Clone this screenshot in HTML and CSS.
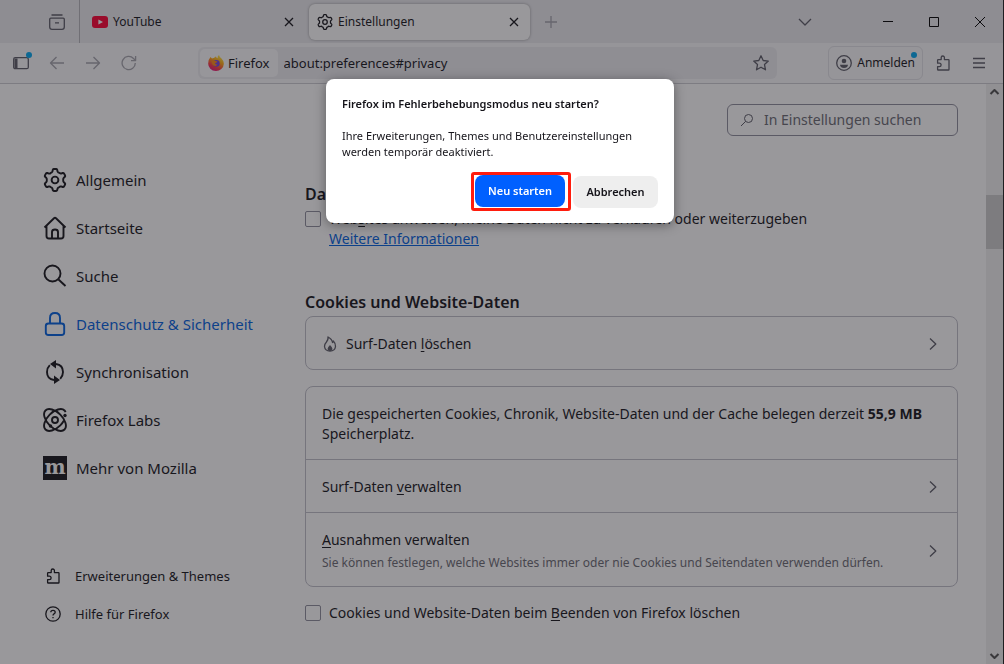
FILE: index.html
```
<!DOCTYPE html>
<html lang="de">
  <head>
    <meta charset="UTF-8" />
    <meta name="viewport" content="width=device-width, initial-scale=1.0" />
    <title>Einstellungen</title>
    <link rel="stylesheet" href="styles.css">
  </head>
  <body>
    <svg class="sprite" aria-hidden="true">
      <symbol id="gear" viewBox="-12 -12 24 24">
        <path d="M-2.6-8.4L-2.2-10.2Q-1.9-11 -1.1-11H1.1Q1.9-11 2.2-10.2L2.6-8.4Q3.2-7.2 4.2-7.2L6-6.4L7.7-7Q8.6-7.2 9-6.5L10.1-4.6Q10.5-3.8 9.9-3.2L8.6-2Q7.8-1 8.3 0Q7.8 1 8.6 2L9.9 3.2Q10.5 3.8 10.1 4.6L9 6.5Q8.6 7.2 7.7 7L6 6.4Q5 6.2 4.2 7.2Q3.2 7.2 2.6 8.4L2.2 10.2Q1.9 11 1.1 11H-1.1Q-1.9 11-2.2 10.2L-2.6 8.4Q-3.2 7.2-4.2 7.2Q-5 6.2-6 6.4L-7.7 7Q-8.6 7.2-9 6.5L-10.1 4.6Q-10.5 3.8-9.9 3.2L-8.6 2Q-7.8 1-8.3 0Q-7.8-1-8.6-2L-9.9-3.2Q-10.5-3.8-10.1-4.6L-9-6.5Q-8.6-7.2-7.7-7L-6-6.4Q-5-6.2-4.2-7.2Q-3.2-7.2-2.6-8.4Z" />
        <circle r="3.4" />
      </symbol>
      <symbol id="puzzle" viewBox="0 0 16 16">
        <path d="M2.6 5.2Q2.6 4.6 3.2 4.6H6.2V2.6a1.6 1.6 0 0 1 3.2 0V4.6H13.4Q14 4.6 14 5.2V14.4Q14 15 13.4 15H3.2Q2.6 15 2.6 14.4V11.6H4.4a1.6 1.6 0 0 0 0-3.4H2.6Z" />
      </symbol>
      <symbol id="close" viewBox="0 0 16 16">
        <path d="M4 4L12 12M12 4L4 12" />
      </symbol>
      <symbol id="chevron" viewBox="0 0 16 16">
        <path d="M5 2.5L10.8 8L5 13.5" />
      </symbol>
    </svg>

    <div class="window">
      <header class="tab-strip">
        <button class="archive" aria-label="Ansicht">
          <svg class="icon" viewBox="0 0 16 16"><path d="M2.5 1H13.5M1.8 4.2H14.2Q15.3 4.2 15.3 5.3V13Q15.3 15.3 13 15.3H3Q.7 15.3 .7 13V5.3Q.7 4.2 1.8 4.2ZM6 8.8H10" /></svg>
        </button>
        <div class="tab">
          <svg class="icon youtube" viewBox="0 0 16 16"><rect y="2" width="16" height="12" rx="3" /><path d="M6.4 5.4L11 8L6.4 10.6Z" /></svg>
          <span>YouTube</span>
          <button aria-label="Tab schließen"><svg class="icon dark"><use href="#close" /></svg></button>
        </div>
        <div class="tab active">
          <svg class="icon dark gear"><use href="#gear" /></svg>
          <span>Einstellungen</span>
          <button aria-label="Tab schließen"><svg class="icon dark"><use href="#close" /></svg></button>
        </div>
        <button class="new-tab" aria-label="Neuer Tab"><svg class="icon faint" viewBox="0 0 16 16"><path d="M8 2V14M2 8H14" /></svg></button>
        <div class="window-buttons">
          <button class="all-tabs" aria-label="Alle Tabs"><svg class="icon" viewBox="0 0 16 16"><path d="M2 5L8 11L14 5" /></svg></button>
          <button aria-label="Minimieren"><svg class="icon caption" viewBox="0 0 16 16"><path d="M3 7.5H13" /></svg></button>
          <button aria-label="Maximieren"><svg class="icon caption" viewBox="0 0 16 16"><path d="M3.5 3.5H12.5V12.5H3.5Z" /></svg></button>
          <button aria-label="Schließen"><svg class="icon caption" viewBox="0 0 16 16"><path d="M3 3L13 13M13 3L3 13" /></svg></button>
        </div>
      </header>

      <div class="toolbar">
        <button class="tool" aria-label="Seitenleiste">
          <svg class="icon" viewBox="0 0 16 16"><rect x=".7" y="2.7" width="14.6" height="11" rx="1.5" /><path d="M1.5 3.5H4.5V13H1.5Z" class="fill" /></svg>
          <i class="dot"></i>
        </button>
        <button class="tool" aria-label="Zurück"><svg class="icon faint" viewBox="0 0 16 16"><path d="M15 8H1.5M7.5 2L1.5 8L7.5 14" /></svg></button>
        <button class="tool" aria-label="Vor"><svg class="icon faint" viewBox="0 0 16 16"><path d="M1 8H14.5M8.5 2L14.5 8L8.5 14" /></svg></button>
        <button class="tool" aria-label="Neu laden"><svg class="icon faint" viewBox="0 0 16 16"><path d="M14.3 8A6.6 6.6 0 1 1 12.5 3.5L14.5 5.5M14.6 1V5.6H10" /></svg></button>
        <div class="urlbar">
          <div class="identity">
            <svg class="icon firefox" viewBox="0 0 16 16">
              <defs>
                <linearGradient id="flame" x1=".8" y1="0" x2=".3" y2="1">
                  <stop offset="0" stop-color="#fff44f" />
                  <stop offset=".4" stop-color="#ffa810" />
                  <stop offset=".75" stop-color="#ff3647" />
                  <stop offset="1" stop-color="#e31587" />
                </linearGradient>
              </defs>
              <path d="M2.5 2L4 3.5Q5 2.8 6 3Q7 1.8 8 1.5Q8 2.5 9.5 3.2Q9.5 1 11 0Q11.5 2 13.5 3.5Q16 6 15.8 9A7.8 7.2 0 0 1 .2 8.5Q.2 4.5 2.5 2Z" fill="url(#flame)" />
              <circle cx="8.4" cy="8.4" r="3.3" fill="#7542e5" />
              <path d="M3.5 5.5Q6 4.6 7.5 6L9.5 6.5Q8.5 8 7 8Q7.5 9.8 9.5 9.5Q8 11.8 5.5 10.5Q3.5 9 3.5 5.5Z" fill="#ff8a16" />
            </svg>
            <span>Firefox</span>
          </div>
          <input type="text" aria-label="Adresse" value="about:preferences#privacy" />
          <button aria-label="Lesezeichen"><svg class="icon" viewBox="0 0 16 16"><path d="M8 .8L10.2 5.5L15.3 6.1L11.5 9.6L12.5 14.8L8 12.2L3.5 14.8L4.5 9.6L.7 6.1L5.8 5.5Z" /></svg></button>
        </div>
        <button class="account">
          <svg class="icon" viewBox="0 0 16 16"><circle cx="8" cy="8" r="7.3" /><circle cx="8" cy="6" r="2.3" class="fill" /><path d="M4 9.8H12Q11.5 13 8 13T4 9.8Z" class="fill" /></svg>
          <span>Anmelden</span>
          <i class="dot"></i>
        </button>
        <button class="tool" aria-label="Erweiterungen"><svg class="icon"><use href="#puzzle" /></svg></button>
        <button class="tool" aria-label="Menü"><svg class="icon" viewBox="0 0 16 16"><path d="M2 3.5H14M2 8H14M2 12.5H14" /></svg></button>
      </div>

      <div class="content">
        <nav class="sidebar">
          <div class="categories">
            <a href="#general"><svg class="gear"><use href="#gear" /></svg>Allgemein</a>
            <a href="#home"><svg viewBox="0 0 24 24"><path d="M1.5 11.5L11 2.3Q12 1.4 13 2.3L22.5 11.5M3.5 10V20Q3.5 22.5 6 22.5H18Q20.5 22.5 20.5 20V10M9 22V16Q9 13.5 12 13.5T15 16V22" /></svg>Startseite</a>
            <a href="#search"><svg viewBox="0 0 24 24"><circle cx="9.5" cy="9.5" r="8" /><path d="M15.5 15.5L22.5 22" /></svg>Suche</a>
            <a href="#privacy" class="selected"><svg viewBox="0 0 24 24"><path d="M7 11V6Q7 1 12 1T17 6V11M5.5 11.5H18.5Q21.2 11.5 21.2 14V20.5Q21.2 23 18.5 23H5.5Q2.8 23 2.8 20.5V14Q2.8 11.5 5.5 11.5Z" /></svg>Datenschutz &amp; Sicherheit</a>
            <a href="#sync"><svg viewBox="0 0 24 24"><path d="M6.8 5.2Q4 8 4 12Q4 19 11 20M17.2 18.8Q20 16 20 12Q20 5 13 4" /><path d="M13 0V8.5L7 4ZM11 15.5V24L17 20Z" class="fill" /></svg>Synchronisation</a>
            <a href="#labs"><svg viewBox="0 0 24 24"><ellipse cx="12" cy="12" rx="13.5" ry="7.5" transform="rotate(45 12 12)" /><ellipse cx="12" cy="12" rx="13.5" ry="7.5" transform="rotate(-45 12 12)" pathLength="100" stroke-dasharray="3 13 84" /><circle cx="12" cy="12" r="3" /><circle cx="22" cy="7.5" r="1.7" class="fill" /><circle cx="7.5" cy="18" r="1.7" class="fill" /></svg>Firefox Labs</a>
            <a href="#more"><span class="moz" aria-hidden="true">m</span>Mehr von Mozilla</a>
          </div>
          <div class="support">
            <a href="#addons"><svg class="icon dark"><use href="#puzzle" /></svg>Erweiterungen &amp; Themes</a>
            <a href="#help"><svg class="icon dark" viewBox="0 0 16 16"><circle cx="8" cy="8" r="7.2" /><path d="M5.8 6.3Q5.8 4.3 8 4.3T10.2 6.2Q10.2 7.2 9 7.8Q8 8.3 8 9.5M8 11V12.3" /></svg>Hilfe für Firefox</a>
          </div>
        </nav>

        <main>
          <label class="search">
            <svg class="icon" viewBox="0 0 16 16"><circle cx="8.5" cy="6.5" r="4" /><path d="M5.6 9.4L1 14" /></svg>
            <input type="search" aria-label="In Einstellungen suchen" placeholder="In Einstellungen suchen" />
          </label>

          <h2 class="first">Datenschutz</h2>
          <div class="check">
            <input type="checkbox" id="dnt" />
            <div>
              <label for="dnt">Web<u>s</u>ites anweisen, meine Daten nicht zu verkaufen oder weiterzugeben</label>
              <a href="#info">Weitere Informationen</a>
            </div>
          </div>

          <h2>Cookies und Website-Daten</h2>
          <div class="card">
            <button class="row">
              <svg class="icon" viewBox="0 0 16 16"><path d="M6 1Q10 3 10.5 6.5Q11.3 6 11.3 5Q13.8 7.5 13.5 10.5Q13 15 8 15T2.5 10.5Q2.5 8 4.3 6.2Q6.5 4 6 1Z" /><path d="M8 9Q10.5 11.5 10.5 13Q10 15 8 15T5.5 13Q5.5 11.5 8 9Z" class="fill" /></svg>
              <span class="text">Surf-Daten <u>l</u>öschen</span>
              <svg class="icon"><use href="#chevron" /></svg>
            </button>
          </div>
          <div class="card">
            <p class="row">Die gespeicherten Cookies, Chronik, Website-Daten und der Cache belegen derzeit <b>55,9 MB</b> Speicherplatz.</p>
            <button class="row">
              <span class="text">Surf-Daten <u>v</u>erwalten</span>
              <svg class="icon"><use href="#chevron" /></svg>
            </button>
            <button class="row">
              <span class="text"><u>A</u>usnahmen verwalten<small>Sie können festlegen, welche Websites immer oder nie Cookies und Seitendaten verwenden dürfen.</small></span>
              <svg class="icon"><use href="#chevron" /></svg>
            </button>
          </div>
          <div class="check">
            <input type="checkbox" id="clear" />
            <label for="clear">Cookies und Website-Daten beim <u>B</u>eenden von Firefox löschen</label>
          </div>
        </main>

        <div class="scrollbar">
          <svg viewBox="0 0 16 16"><path d="M4 10L8 6L12 10" /></svg>
          <div class="thumb"></div>
          <svg viewBox="0 0 16 16"><path d="M4 6L8 10L12 6" /></svg>
        </div>
      </div>
    </div>

    <div class="overlay">
      <div class="dialog" role="dialog" aria-labelledby="dialog-title">
        <h1 id="dialog-title">Firefox im Fehlerbehebungsmodus neu starten?</h1>
        <p>Ihre Erweiterungen, Themes und Benutzereinstellungen werden temporär deaktiviert.</p>
        <div class="actions">
          <div class="marker"><button class="primary">Neu starten</button></div>
          <button>Abbrechen</button>
        </div>
      </div>
    </div>
  </body>
</html>
```
FILE: styles.css
```
* {
  box-sizing: border-box;
}
body {
  margin: 0;
  font-family: "Noto Sans", "Open Sans", sans-serif;
  font-size: 14px;
  line-height: 20px;
  color: #15141a;
}
h1,
h2,
p {
  margin: 0;
}
button,
input {
  font: inherit;
  color: inherit;
}
button {
  display: flex;
  align-items: center;
  justify-content: center;
  margin: 0;
  padding: 0;
  border: 0;
  background: none;
}
a {
  color: inherit;
  text-decoration: none;
}
svg {
  flex: none;
  fill: none;
  stroke: #5b5b66;
  stroke-linejoin: round;
}
.sprite {
  display: none;
}
.icon {
  width: 16px;
  height: 16px;
  stroke-width: 1.3;
}
.icon.dark {
  stroke: #15141a;
}
.icon.faint {
  stroke: #a4a4ac;
}
.icon.caption {
  stroke: #000;
  stroke-width: 1;
}
.icon.gear {
  stroke-width: 1.9;
}
.fill {
  fill: #5b5b66;
  stroke: none;
}

.window {
  display: flex;
  flex-direction: column;
  height: 100vh;
  overflow: hidden;
  border-right: 1px solid #222;
  background: #fff;
}

/* tabs */
.tab-strip {
  display: flex;
  align-items: center;
  flex: none;
  height: 43px;
  background: #ebebef;
  font-size: 12px;
}
.archive {
  align-self: stretch;
  width: 80px;
  padding-left: 34px;
  border-right: 1px solid #b5b5bb;
}
.tab {
  display: flex;
  align-items: center;
  gap: 5px;
  width: 221px;
  height: 36px;
  margin-left: 4px;
  padding: 0 8px;
  border-radius: 6px;
}
.tab span {
  flex: 1;
}
.tab.active {
  background: #fff;
  box-shadow: 0 0 3px rgba(0, 0, 0, 0.35);
}
.youtube {
  stroke: none;
}
.youtube rect {
  fill: #ff0033;
}
.youtube path {
  fill: #fff;
}
.new-tab {
  margin-left: 13px;
}
.window-buttons {
  display: flex;
  margin-left: auto;
}
.window-buttons button {
  width: 46px;
  height: 40px;
}
.window-buttons .all-tabs {
  width: 36px;
  margin-right: 42px;
}

/* toolbar */
.toolbar {
  display: flex;
  align-items: center;
  flex: none;
  height: 41px;
  padding: 0 6px 0 3px;
  border-bottom: 1px solid #ccccd2;
  background: #f9f9fb;
}
.tool,
.account {
  position: relative;
  width: 36px;
  height: 32px;
}
.dot {
  position: absolute;
  top: 5px;
  right: 7px;
  width: 6px;
  height: 6px;
  border-radius: 50%;
  background: #00a8f0;
}
.urlbar {
  display: flex;
  align-items: center;
  flex: 1;
  height: 32px;
  margin: 0 51px;
  padding: 2px 8px 2px 2px;
  border-radius: 6px;
  background: #ededf1;
}
.urlbar input {
  flex: 1;
  min-width: 0;
  margin: 0;
  padding: 0 6px;
  border: 0;
  background: none;
  font-size: 13px;
}
.identity {
  display: flex;
  align-items: center;
  gap: 4px;
  height: 28px;
  padding: 0 8px;
  border-radius: 5px;
  background: #fbfbfd;
  font-size: 13px;
}
.firefox {
  stroke: none;
}
.account {
  gap: 5px;
  width: auto;
  height: 34px;
  margin-right: 2px;
  padding: 0 7px;
  border: 1px solid #e2e2e7;
  border-radius: 6px;
  font-size: 12px;
}
.account .dot {
  right: 5px;
}

/* page */
.content {
  display: flex;
  flex: 1;
  min-height: 0;
}
.sidebar {
  display: flex;
  flex-direction: column;
  justify-content: space-between;
  width: 305px;
  padding: 72px 0 31px 43px;
}
.sidebar a {
  display: flex;
  align-items: center;
}
.categories a {
  gap: 9px;
  height: 48px;
  font-size: 15px;
}
.categories svg {
  width: 24px;
  height: 24px;
  stroke: #15141a;
  stroke-width: 1.9;
}
.categories .fill {
  fill: #15141a;
  stroke: none;
}
.categories .selected {
  color: #0061e0;
}
.categories .selected svg {
  stroke: #0061e0;
}
.moz {
  width: 24px;
  height: 24px;
  overflow: hidden;
  background: #15141a;
  color: #fff;
  font: bold 20px/22px "DejaVu Serif", serif;
  text-align: center;
}
.support a {
  gap: 14px;
  height: 38px;
  padding-left: 2px;
  font-size: 13px;
}
main {
  flex: 1;
  min-width: 0;
  padding: 20px 28px 0 0;
}
.search {
  display: flex;
  align-items: center;
  gap: 8px;
  width: 231px;
  height: 32px;
  margin-left: auto;
  padding: 0 12px;
  border: 1px solid #8f8f9d;
  border-radius: 6px;
}
.search .icon {
  stroke-width: 1;
}
.search input {
  flex: 1;
  min-width: 0;
  padding: 0;
  border: 0;
  outline: 0;
  background: none;
}
.search input::placeholder {
  color: #6a6a73;
}
h2 {
  margin-top: 41px;
  font-size: 16px;
  line-height: 24px;
  font-weight: 600;
}
h2.first {
  margin-top: 46px;
}
.check {
  display: flex;
  align-items: flex-start;
  gap: 8px;
  margin-top: 3px;
}
.check input {
  appearance: none;
  flex: none;
  width: 16px;
  height: 16px;
  margin: 2px 0;
  border: 1px solid #8f8f9d;
  border-radius: 2px;
}
.check a {
  display: block;
  width: fit-content;
  color: #0061e0;
  text-decoration: underline;
}
u {
  text-underline-offset: 2px;
}
.card {
  margin-top: 2px;
  border: 1px solid #bfbfc9;
  border-radius: 8px;
}
.card + .card,
.card + .check {
  margin-top: 16px;
}
.row {
  display: block;
  width: 100%;
  padding: 17px 16px 15px;
}
.row + .row {
  border-top: 1px solid #bfbfc9;
}
button.row {
  display: flex;
  gap: 8px;
  text-align: left;
}
.row .text {
  flex: 1;
}
.row small {
  display: block;
  margin-top: 4px;
  font-size: 12px;
  line-height: 17px;
  color: #6a6a73;
}
.scrollbar {
  display: flex;
  flex-direction: column;
  justify-content: space-between;
  width: 17px;
  background: #f0f0f0;
}
.scrollbar svg {
  width: 17px;
  height: 16px;
  stroke: #505050;
  stroke-width: 2;
}
.thumb {
  height: 54px;
  margin-bottom: 304px;
  background: #cdcdcd;
}

/* modal */
.overlay {
  position: fixed;
  inset: 0;
  padding: 79px 16px 0 12px;
  background: rgba(28, 27, 34, 0.45);
}
.dialog {
  max-width: 348px;
  margin: 0 auto;
  padding: 17px 16px 12px;
  border-radius: 8px;
  background: #fff;
  box-shadow: 0 2px 12px rgba(0, 0, 0, 0.4);
  font-size: 11px;
  line-height: 16px;
}
.dialog h1 {
  margin-bottom: 16px;
  font-size: 11px;
  font-weight: 600;
}
.actions {
  display: flex;
  align-items: center;
  justify-content: flex-end;
  gap: 2px;
  margin-top: 12px;
}
.actions button {
  min-width: 85px;
  height: 32px;
  padding: 0 12px;
  border-radius: 8px;
  background: #eee;
  font-weight: 600;
}
.marker {
  padding: 0 3px 1px 1px;
  border: 3px solid #ff1d0d;
  border-radius: 3px;
}
.actions .primary {
  min-width: 90px;
  background: #0060ff;
  color: #fff;
}
```
